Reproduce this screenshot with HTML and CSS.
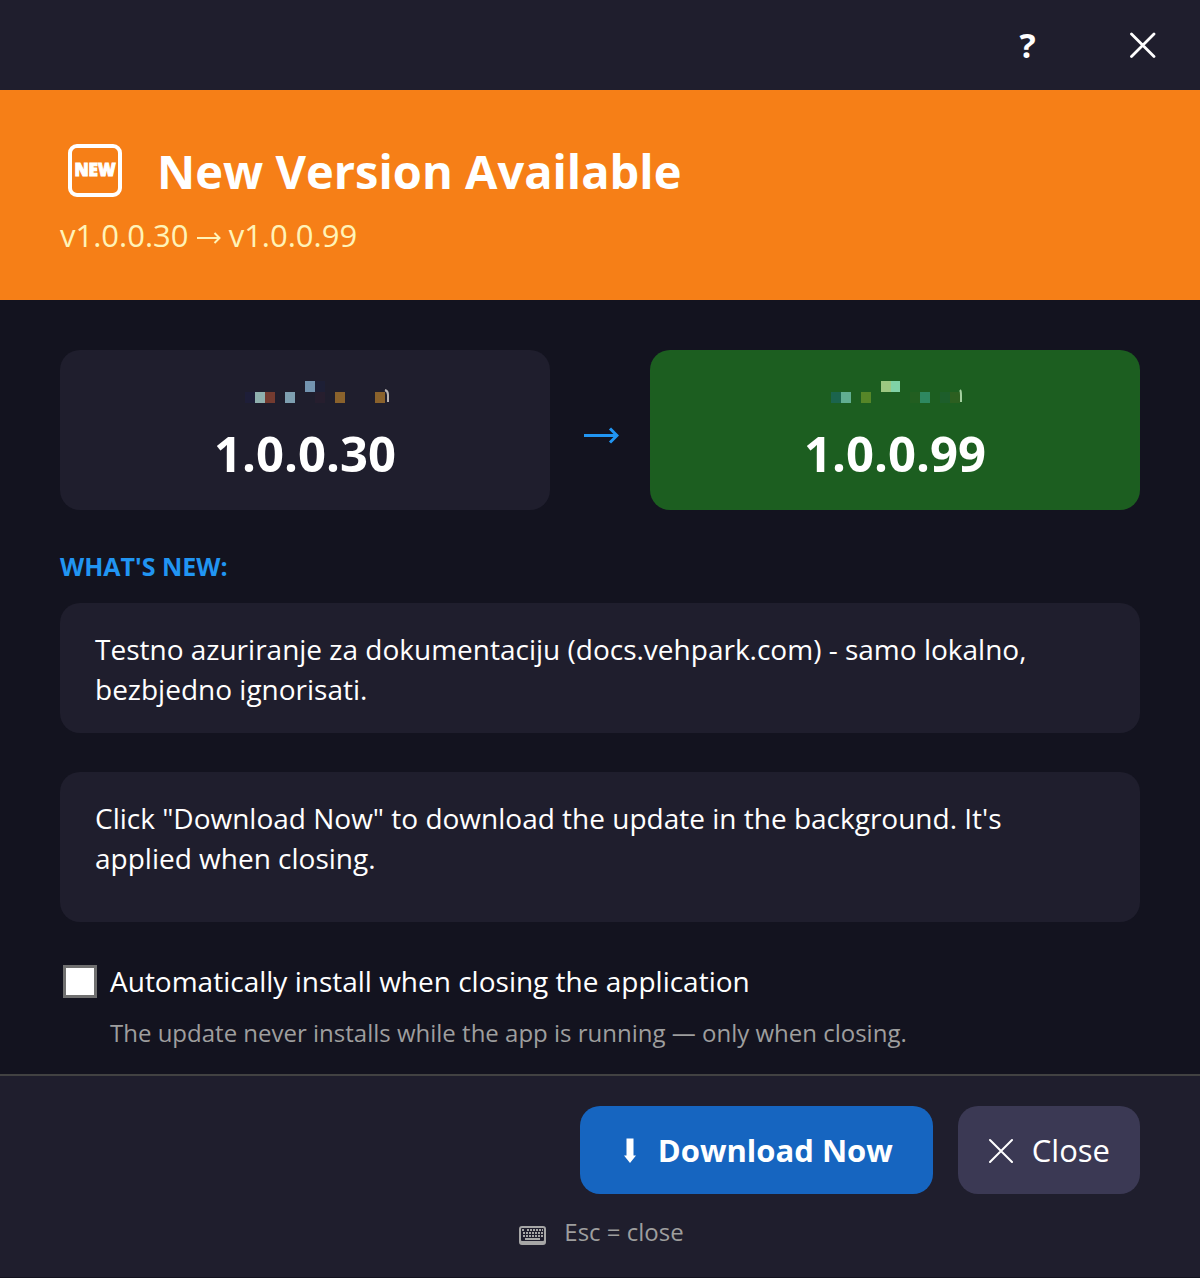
FILE: index.html
```html
<!DOCTYPE html>
<html lang="en">
<head>
<meta charset="utf-8">
<meta name="viewport" content="width=device-width, initial-scale=1">
<title>New Version Available</title>
<link rel="stylesheet" href="styles.css">
</head>
<body>
<main class="dialog">
  <div class="titlebar">
    <button class="titlebar-button" type="button" aria-label="Help">?</button>
    <button class="titlebar-button" type="button" aria-label="Close window">
      <svg class="icon-x" viewBox="0 0 26 26" aria-hidden="true"><path d="M1.5 2 24 24.5M24 2 1.5 24.5" stroke-width="2.8"/></svg>
    </button>
  </div>

  <header class="banner">
    <div class="banner-heading">
      <svg class="icon-new" viewBox="0 0 56 54" aria-hidden="true">
        <rect x="3" y="2" width="50" height="49" rx="7"/>
        <text x="28" y="32" text-anchor="middle">NEW</text>
      </svg>
      <h1 class="banner-title">New Version Available</h1>
    </div>
    <p class="banner-versions">v1.0.0.30
      <svg class="icon-arrow-small" viewBox="0 0 24 14" aria-hidden="true"><path d="M0 7H22.5M17.5 2 22.5 7 17.5 12"/></svg>
      v1.0.0.99</p>
  </header>

  <section class="content">
    <div class="versions">
      <div class="version">
        <svg class="version-label" viewBox="-15 0 160 24" aria-hidden="true">
          <path fill="#1e1e38" d="M0 12h10v11H0z"/>
          <path fill="#8fb0ae" d="M10 12h10v11H10z"/>
          <path fill="#743b30" d="M20 12h10v11H20z"/>
          <path fill="#7e9fb0" d="M40 12h10v11H40z"/>
          <path fill="#7394b0" d="M60 1h10v11H60z"/>
          <path fill="#1d1f35" d="M70 1h10v11H70z"/>
          <path fill="#261e2e" d="M70 12h10v11H70z"/>
          <path fill="#8a622c" d="M90 12h10v11H90zM130 12h10v11H130z"/>
          <path fill="none" stroke="#b9b4b3" stroke-width="2" d="M140 10q3 1 3 5v7"/>
        </svg>
        <strong class="version-number">1.0.0.30</strong>
      </div>
      <svg class="icon-arrow" viewBox="0 0 36 18" aria-hidden="true"><path d="M1 8.500H34M27 1.500 34 8.500 27 15.500"/></svg>
      <div class="version version-new">
        <svg class="version-label" viewBox="-5 0 160 24" aria-hidden="true">
          <path fill="#1b644d" d="M6 12h10v11H6z"/>
          <path fill="#61ae91" d="M16 12h10v11H16z"/>
          <path fill="#568628" d="M36 12h10v11H36z"/>
          <path fill="#9cc881" d="M56 1h10v11H56z"/>
          <path fill="#80d2a6" d="M66 1h9v11H66z"/>
          <path fill="#225e20" d="M85 12h10v11H85z"/>
          <path fill="#2e8860" d="M95 12h10v11H95z"/>
          <path fill="#1d5e2b" d="M115 12h10v11H115z"/>
          <path fill="#2c5f20" d="M125 12h10v11H125z"/>
          <path fill="none" stroke="#a4d0a0" stroke-width="2" d="M135 10q1 1 1 5v7"/>
        </svg>
        <strong class="version-number">1.0.0.99</strong>
      </div>
    </div>

    <h2 class="section-title">WHAT'S NEW:</h2>
    <p class="note">Testno azuriranje za dokumentaciju (docs.vehpark.com) - samo lokalno, bezbjedno ignorisati.</p>
    <p class="note note-info">Click "Download Now" to download the update in the background. It's applied when closing.</p>

    <div class="option">
      <input class="option-box" type="checkbox" id="auto-install" aria-describedby="auto-hint">
      <label class="option-label" for="auto-install">Automatically install when closing the application</label>
      <p class="option-hint" id="auto-hint">The update never installs while the app is running — only when closing.</p>
    </div>
  </section>

  <footer class="footer">
    <div class="actions">
      <button class="button button-primary" type="button">
        <svg class="icon-down" viewBox="0 0 12 26" aria-hidden="true"><path d="M2.5 1.5H9.5V18.5H12L6 26 0 18.5H2.5z"/></svg>
        Download Now
      </button>
      <button class="button" type="button">
        <svg class="icon-x" viewBox="0 0 26 26" aria-hidden="true"><path d="M2 3 24 25M24 3 2 25" stroke-width="2"/></svg>
        Close
      </button>
    </div>
    <p class="shortcut">
      <svg class="icon-keyboard" viewBox="0 0 28 20" aria-hidden="true">
        <path fill-rule="evenodd" d="M3 0H24Q27 0 27 3V16Q27 19 24 19H3Q0 19 0 16V3Q0 0 3 0zM3 2Q2 2 2 3V14Q2 15 3 15H24Q25 15 25 14V3Q25 2 24 2z"/>
        <path class="keys" d="M3 4H5M8 4H24M4 7H24M4 10H24"/>
        <path d="M6 12H21V14H6z"/>
      </svg>
      Esc = close
    </p>
  </footer>
</main>
</body>
</html>
```

FILE: styles.css
```css
* { box-sizing: border-box; }

body {
  margin: 0;
  background: #13131f;
  color: #fff;
  font-family: "Open Sans", "Noto Sans", sans-serif;
  font-size: 28px;
  line-height: 40px;
}

h1, h2, p { margin: 0; }
svg { flex: none; }

button {
  border: 0;
  padding: 0;
  color: inherit;
  font: inherit;
  cursor: pointer;
}

.dialog {
  display: flex;
  flex-direction: column;
  min-height: 100vh;
}

.titlebar {
  display: flex;
  justify-content: flex-end;
  height: 90px;
  background: #1f1e2d;
}

.titlebar-button {
  display: flex;
  align-items: center;
  justify-content: center;
  width: 115px;
  background: none;
  font-size: 34px;
  font-weight: 700;
}

.icon-x {
  width: 26px;
  height: 26px;
  fill: none;
  stroke: #fff;
  stroke-linecap: round;
}

.banner {
  padding: 49px 60px 41px;
  background: #f67f17;
}

.banner-heading {
  display: flex;
  align-items: center;
  gap: 34px;
  height: 64px;
  padding-left: 7px;
}

.icon-new {
  width: 56px;
  height: 54px;
}

.icon-new rect {
  fill: none;
  stroke: #fff;
  stroke-width: 4;
}

.icon-new text {
  fill: #fff;
  stroke: #fff;
  stroke-width: 1;
  font-size: 17px;
  font-weight: 800;
}

.banner-title {
  font-size: 47px;
  font-weight: 700;
  line-height: 64px;
}

.banner-versions {
  padding: 12px 0 4px;
  color: #fff3b8;
  font-size: 31px;
}

.icon-arrow-small {
  width: 24px;
  height: 14px;
  vertical-align: 2px;
  fill: none;
  stroke: #fff3b8;
  stroke-width: 2;
}

.content {
  flex: 1;
  padding: 50px 60px 20px;
}

.versions {
  display: flex;
  align-items: center;
}

.version {
  display: flex;
  flex: 1;
  flex-direction: column;
  align-items: center;
  height: 160px;
  padding-top: 30px;
  border-radius: 20px;
  background: #1f1e2d;
}

.version-new { background: #1c5e20; }

.version-label {
  width: 160px;
  height: 24px;
  margin-left: 10px;
}

.version-number {
  font-size: 49px;
  line-height: 64px;
  padding-top: 17px;
}

.icon-arrow {
  width: 36px;
  height: 18px;
  margin: 12px 31px 0 33px;
  fill: none;
  stroke: #2195f2;
  stroke-width: 3;
}

.section-title {
  padding: 36px 0 17px;
  color: #2195f2;
  font-size: 25px;
  font-weight: 700;
}

.note {
  padding: 26px 35px 24px;
  border-radius: 20px;
  background: #1f1e2d;
}

.note-info {
  min-height: 150px;
  margin-top: 39px;
}

.option {
  display: grid;
  grid-template-columns: 34px 1fr;
  column-gap: 13px;
  row-gap: 12px;
  align-items: center;
  padding: 39px 0 0 3px;
}

.option-box {
  appearance: none;
  width: 34px;
  height: 33px;
  margin: 0;
  border: 3px solid #707070;
  background: #fff;
}

.option-box:checked { background: #2195f2; }

.option-hint {
  grid-column: 2;
  color: #9e9e9e;
  font-size: 24px;
}

.footer {
  padding: 30px 60px 25px;
  border-top: 2px solid #424242;
  border-bottom: 1px solid #13131f;
  background: #1f1e2d;
}

.actions {
  display: flex;
  justify-content: flex-end;
  gap: 25px;
}

.button {
  display: flex;
  align-items: center;
  gap: 18px;
  height: 88px;
  padding: 0 30px;
  border-radius: 20px;
  background: #3b3954;
  font-size: 31px;
}

.button-primary {
  gap: 22px;
  padding: 0 40px 0 44px;
  background: #1665c0;
  font-weight: 700;
}

.icon-down {
  width: 12px;
  height: 26px;
  fill: #fff;
}

.shortcut {
  display: flex;
  align-items: center;
  justify-content: center;
  gap: 17px;
  padding: 18px 0 0 3px;
  color: #9e9e9e;
  font-size: 24px;
}

.icon-keyboard {
  width: 28px;
  height: 20px;
  margin-top: 8px;
  fill: #a6a6a6;
}

.icon-keyboard .keys {
  fill: none;
  stroke: #a6a6a6;
  stroke-width: 2;
  stroke-dasharray: 2 1;
}
```
